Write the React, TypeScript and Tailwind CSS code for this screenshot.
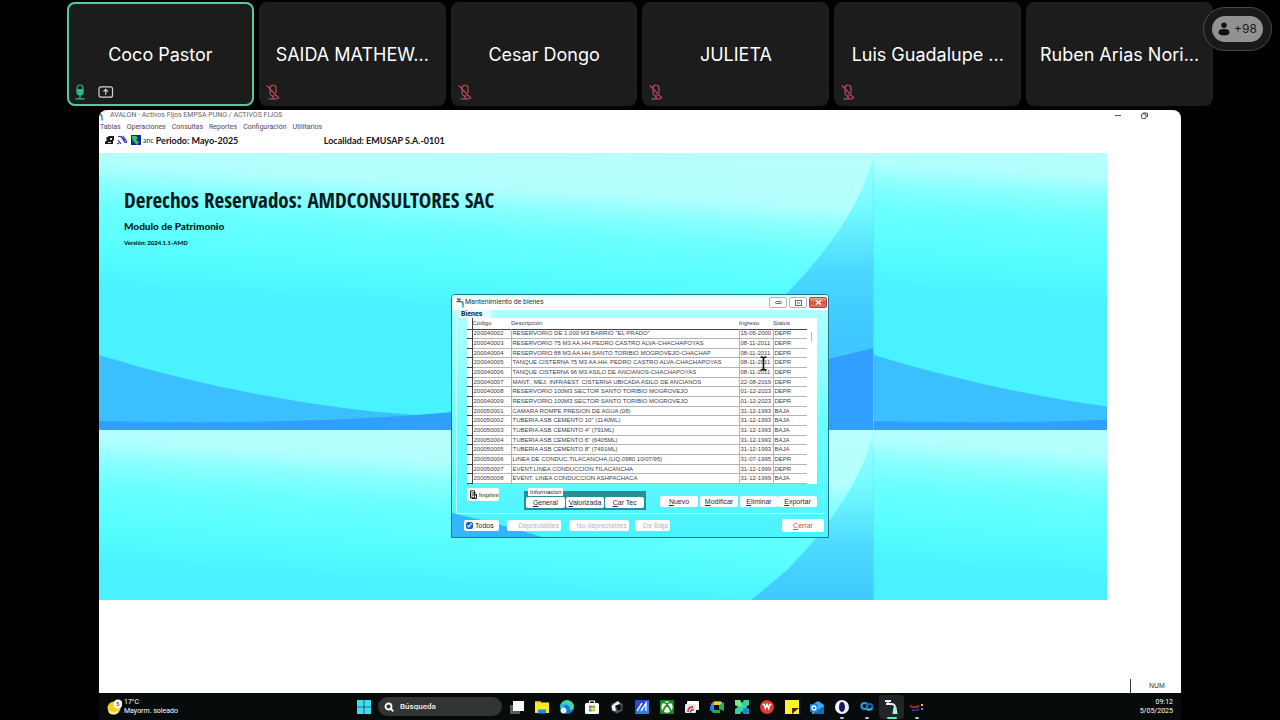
import type { ReactNode } from 'react';
import clsx from 'clsx';

interface Participant {
  name: string;
  mic: 'on' | 'off' | 'none';
  sharing?: boolean;
}

interface Asset {
  code: string;
  description: string;
  date: string;
  status: 'DEPR' | 'BAJA';
}

const PARTICIPANTS: Participant[] = [
  { name: 'Coco Pastor', mic: 'on', sharing: true },
  { name: 'SAIDA MATHEW...', mic: 'off' },
  { name: 'Cesar Dongo', mic: 'off' },
  { name: 'JULIETA', mic: 'off' },
  { name: 'Luis Guadalupe ...', mic: 'off' },
  { name: 'Ruben Arias Nori...', mic: 'none' },
];

const MENUS = ['Tablas', 'Operaciones', 'Consultas', 'Reportes', 'Configuración', 'Utilitarios'];

const ASSETS: Asset[] = [
  { code: '200040002', description: 'RESERVORIO DE 1,000 M3 BARRIO "EL PRADO"', date: '15-05-2000', status: 'DEPR' },
  { code: '200040003', description: 'RESERVORIO 75 M3 AA.HH.PEDRO CASTRO ALVA-CHACHAPOYAS', date: '08-11-2011', status: 'DEPR' },
  { code: '200040004', description: 'RESERVORIO 88 M3 AA.HH.SANTO TORIBIO MOGROVEJO-CHACHAP', date: '08-11-2011', status: 'DEPR' },
  { code: '200040005', description: 'TANQUE CISTERNA 75 M3 AA.HH. PEDRO CASTRO ALVA-CHACHAPOYAS', date: '08-11-2011', status: 'DEPR' },
  { code: '200040006', description: 'TANQUE CISTERNA 96 M3 ASILO DE ANCIANOS-CHACHAPOYAS', date: '08-11-2011', status: 'DEPR' },
  { code: '200040007', description: 'MANT., MEJ. INFRAEST. CISTERNA UBICADA ASILO DE ANCIANOS', date: '22-08-2019', status: 'DEPR' },
  { code: '200040008', description: 'RESERVORIO 100M3 SECTOR SANTO TORIBIO MOGROVEJO', date: '01-12-2023', status: 'DEPR' },
  { code: '200040009', description: 'RESERVORIO 100M3 SECTOR SANTO TORIBIO MOGROVEJO', date: '01-12-2023', status: 'DEPR' },
  { code: '200050001', description: 'CAMARA ROMPE PRESION DE AGUA (08)', date: '31-12-1993', status: 'BAJA' },
  { code: '200050002', description: 'TUBERIA ASB CEMENTO 10" (1140ML)', date: '31-12-1993', status: 'BAJA' },
  { code: '200050003', description: 'TUBERIA ASB CEMENTO 4" (791ML)', date: '31-12-1993', status: 'BAJA' },
  { code: '200050004', description: 'TUBERIA ASB CEMENTO 6" (6405ML)', date: '31-12-1993', status: 'BAJA' },
  { code: '200050005', description: 'TUBERIA ASB CEMENTO 8" (7491ML)', date: '31-12-1993', status: 'BAJA' },
  { code: '200050006', description: 'LINEA DE CONDUC.TILACANCHA (LIQ.0980 10/07/95)', date: '31-07-1995', status: 'DEPR' },
  { code: '200050007', description: 'EVENT.LINEA CONDUCCION TILACANCHA', date: '31-12-1999', status: 'DEPR' },
  { code: '200050008', description: 'EVENT. LINEA CONDUCCION ASHPACHACA', date: '31-12-1999', status: 'BAJA' },
];

/* ── Meeting strip ─────────────────────────────────────────── */

function MicOn() {
  return (
    <svg width="12" height="16" viewBox="0 0 12 16" fill="none" stroke="#2bb98c" strokeWidth="1.2">
      <rect x="3" y="1" width="6" height="10" rx="3" />
      <path d="M3.500 5.500h5v3a2.500 2.500 0 0 1-5 0z" fill="#2bb98c" />
      <path d="M6 11.500v3M1.500 14.800h9" />
    </svg>
  );
}

function MicOff() {
  return (
    <svg width="14" height="16" viewBox="0 0 14 16" fill="none" stroke="#c04a5c" strokeWidth="1.2">
      <path d="M4 4.500a3 3 0 0 1 6-.5v5M4 6v3a3 3 0 0 0 4.500 2.600" />
      <path d="M7 12v2.800M2.500 14.900h9" />
      <path d="M.8 1.500l12.400 13" />
    </svg>
  );
}

function ShareIcon() {
  return (
    <svg width="16" height="12" viewBox="0 0 16 12" fill="none" stroke="#d4d4d4" strokeWidth="1.2">
      <rect x="1" y=".8" width="13.500" height="10.400" rx="2" />
      <path d="M7.750 8.800V3.500M5.500 5.600l2.250-2.200L10 5.600" />
    </svg>
  );
}

function ParticipantTile({ name, mic, sharing }: Participant) {
  return (
    <div
      className={clsx(
        'relative flex h-[104px] min-w-0 flex-1 items-center justify-center rounded-lg bg-[#1c1c1c]',
        sharing && 'ring-2 ring-inset ring-[#57c9a2]',
      )}
    >
      <span className="whitespace-nowrap pt-0.5 text-[18px] leading-6 text-white">{name}</span>
      <div className="absolute bottom-1.5 left-[7px] flex items-center gap-3">
        {mic === 'on' && <MicOn />}
        {mic === 'off' && <MicOff />}
        {sharing && <ShareIcon />}
      </div>
    </div>
  );
}

function OverflowBadge() {
  return (
    <button
      type="button"
      className="absolute right-2 top-[7px] flex h-11 w-[69px] items-center justify-center rounded-full border border-[#4a4a4a] bg-[#191919]"
    >
      <span className="flex h-[26px] w-[51px] items-center justify-center gap-1 rounded-full bg-[#929292] text-[12px] text-[#1a1a1a]">
        <svg width="12" height="14" viewBox="0 0 12 14" fill="#111">
          <circle cx="6" cy="3.300" r="2.700" />
          <path d="M.5 10.300C.5 8 2.500 7 6 7s5.500 1 5.500 3.300S9.500 13.500 6 13.500.5 12.600.5 10.300z" />
        </svg>
        +98
      </span>
    </button>
  );
}

/* ── Wallpaper ─────────────────────────────────────────────── */

function Wallpaper() {
  return (
    <svg className="absolute inset-0 h-full w-full" viewBox="0 0 1008 447" preserveAspectRatio="none">
      <defs>
        {/* tilted so the haze reaches further down on the right */}
        <linearGradient id="sky" gradientUnits="userSpaceOnUse" x1="0" y1="-45" x2="-11" y2="135">
          <stop offset="0" stopColor="#baffff" />
          <stop offset=".3" stopColor="#b2fffe" />
          <stop offset=".42" stopColor="#8affff" />
          <stop offset=".55" stopColor="#6affff" />
          <stop offset=".8" stopColor="#55fdff" />
          <stop offset="1" stopColor="#48f3ff" />
        </linearGradient>
        <linearGradient id="arc" x1="0" y1="0" x2="0" y2="1">
          <stop offset="0" stopColor="#a0ffff" />
          <stop offset=".2" stopColor="#74fbff" />
          <stop offset=".42" stopColor="#4bd9ff" />
          <stop offset=".6" stopColor="#3fcaff" />
          <stop offset="1" stopColor="#3bbfff" />
        </linearGradient>
        <g id="tile">
          <rect width="775" height="277" fill="url(#sky)" />
          <path d="M0 202C110 236 230 257 318 262L520 277H0z" fill="#3bbfff" />
          <path d="M775 0C765 45 735 92 688 140C630 190 570 235 480 262L775 277z" fill="url(#arc)" />
          <path d="M0 268Q180 272 318 262Q600 240 775 195V277H0z" fill="#319fff" />
          <path d="M774.500 20V277" stroke="#6fe0ff" strokeWidth="1" opacity=".6" />
        </g>
      </defs>
      <use href="#tile" />
      <use href="#tile" x="775" />
      <use href="#tile" y="277" />
      <use href="#tile" x="775" y="277" />
    </svg>
  );
}

/* ── Asset window ──────────────────────────────────────────── */

function FaucetIcon({ className }: { className?: string }) {
  return (
    <svg className={className} width="9" height="10" viewBox="0 0 9 10" fill="none" stroke="#4b5a60" strokeWidth="1.300">
      <path d="M1 1.200h4M3 1.200v2M.5 3.600h4.500c1.500 0 2 .8 2 2.400" />
      <path d="M7 6v3.500" stroke="#3ccfc0" strokeWidth="2" />
    </svg>
  );
}

function WindowButton({ label, close, children }: { label: string; close?: boolean; children: ReactNode }) {
  return (
    <button
      type="button"
      aria-label={label}
      className={clsx(
        'flex h-[11px] w-[18px] items-center justify-center rounded-xs border',
        close ? 'border-[#8b5050] bg-linear-to-b from-[#eba79b] via-[#dd4f38] to-[#e37763]' : 'border-[#a9b7c4] bg-white',
      )}
    >
      {children}
    </button>
  );
}

function ActionButton({ hotkey, rest, className }: { hotkey: string; rest: string; className?: string }) {
  return (
    <button type="button" className={clsx('h-[11px] rounded-xs bg-white text-center text-[7px] leading-none text-[#222a4a]', className)}>
      <u>{hotkey}</u>
      {rest}
    </button>
  );
}

function DisabledFilter({ label, className }: { label: string; className: string }) {
  return (
    <label className={clsx('flex h-[11px] items-center justify-end rounded-xs bg-white px-0.5 text-[#b9b3c6]', className)}>
      <input type="checkbox" disabled className="size-0 appearance-none" />
      {label}
    </label>
  );
}

function AssetTable() {
  return (
    <div className="flex h-[166px] bg-white">
      <table className="h-[166px] w-[340px] table-fixed border-collapse text-[6px] leading-[7px] text-[#40404c]">
        <colgroup>
          <col className="w-[5px]" />
          <col className="w-[39px]" />
          <col />
          <col className="w-[34px]" />
          <col className="w-[34px]" />
        </colgroup>
        <thead>
          <tr className="h-[11px] border-b border-[#444] text-left">
            <th className="border-r border-[#444] p-0" />
            <th className="p-0 font-normal">Código</th>
            <th className="p-0 font-normal">Descripción</th>
            <th className="p-0 font-normal">Ingreso</th>
            <th className="p-0 font-normal">Status</th>
          </tr>
        </thead>
        <tbody>
          {ASSETS.map((a) => (
            <tr key={a.code} className="whitespace-nowrap border-b border-[#b4b4b4]">
              <td className="border-b border-r border-[#444] p-0" />
              <td className="border-r border-[#b4b4b4] p-0 pl-px">{a.code}</td>
              <td className="border-r border-[#b4b4b4] p-0 pl-px">{a.description}</td>
              <td className="border-r border-[#b4b4b4] p-0 pl-px text-[#5a3540]">{a.date}</td>
              <td className="p-0 pl-px">{a.status}</td>
            </tr>
          ))}
        </tbody>
      </table>
      <div className="flex-1 pl-1 pt-3.5">
        <div className="h-2.5 w-px bg-[#b5b5b5]" />
      </div>
    </div>
  );
}

function AssetWindow() {
  return (
    <div className="absolute left-[352px] top-[141px] flex h-[244px] w-[378px] flex-col overflow-hidden rounded-t-sm border border-[#20788c] bg-linear-to-b from-[#b9ffff] via-[#6dffff] to-[#48f3ff] font-['Liberation_Sans',sans-serif] text-[7px] leading-none">
      <header className="flex h-[15px] shrink-0 items-center bg-linear-to-b from-[#d9ffff] via-white to-white pl-1 pr-px">
        <FaucetIcon />
        <h2 className="flex-1 font-['Roboto',sans-serif] text-[7px] text-[#263640]">Mantenimiento de bienes</h2>
        <div className="flex gap-0.5">
          <WindowButton label="Minimizar">
            <svg width="7" height="3" viewBox="0 0 7 3" fill="none" stroke="#667" className="shrink-0"><rect x=".5" y=".5" width="6" height="2" rx="1" /></svg>
          </WindowButton>
          <WindowButton label="Maximizar">
            <svg width="7" height="6" viewBox="0 0 7 6" fill="none" stroke="#667" className="shrink-0"><rect x=".5" y=".5" width="6" height="5" /><path d="M2 3h3" /></svg>
          </WindowButton>
          <WindowButton label="Cerrar ventana" close>
            <svg width="7" height="5" viewBox="0 0 7 5" stroke="#fff" strokeWidth="1.400" className="shrink-0"><path d="M1 .5l5 4M6 .5l-5 4" /></svg>
          </WindowButton>
        </div>
      </header>

      <section className="mx-1 border-x border-b border-[#c4ffff] pl-2.5 pr-1.5">
        <h3 className="-ml-2 h-2 w-8 bg-[#e4ffff] pl-0.5 font-['Roboto',sans-serif] font-bold leading-[8px] text-[#223]">Bienes</h3>
        <AssetTable />
        <div className="flex h-[29px] items-start pt-0.5">
          <button type="button" className="mt-0.5 flex h-[13px] w-8 items-center gap-0.5 rounded-xs bg-white px-0.5 text-[6px] text-[#111]">
            <svg className="shrink-0" width="8" height="9" viewBox="0 0 8 9" fill="none" stroke="#222">
              <path d="M1.500.8h4v7h-4zM2.500 3h4.500M2.500 5h4.500M3 6.500v2h4.500V4" />
            </svg>
            Imprimi
          </button>
          <fieldset className="relative ml-[25px] mt-[5px] flex w-[122px] gap-px border-2 border-t-[6px] border-[#279096] bg-[#279096]">
            <legend className="absolute -top-[9px] left-0.5 bg-white px-0.5 text-[6px] leading-[8px] text-[#223]">Información</legend>
            <ActionButton hotkey="G" rest="eneral" className="flex-1" />
            <ActionButton hotkey="V" rest="alorizada" className="flex-1" />
            <ActionButton hotkey="C" rest="ar Tec" className="flex-1" />
          </fieldset>
          <div className="ml-auto mt-2.5 flex">
            <ActionButton hotkey="N" rest="uevo" className="mr-0.5 w-[38px]" />
            <ActionButton hotkey="M" rest="odificar" className="mr-0.5 w-[38px]" />
            <ActionButton hotkey="E" rest="liminar" className="w-[38px]" />
            <ActionButton hotkey="E" rest="xportar" className="w-[39px]" />
          </div>
        </div>
      </section>

      <footer className="relative flex flex-1 items-center px-1 pl-3">
        <svg className="absolute bottom-0 left-0" width="90" height="24" viewBox="0 0 90 24">
          <path d="M0 0Q45 10 90 24H0z" fill="#35b4ff" />
        </svg>
        <label className="relative flex h-[11px] w-[35px] items-center gap-0.5 rounded-xs bg-white px-0.5 text-[#223]">
          <input type="checkbox" defaultChecked className="size-[7px] accent-[#0a66c8]" />
          Todos
        </label>
        <DisabledFilter label="Depreciables" className="relative ml-2 w-[54px]" />
        <DisabledFilter label="No depreciables" className="ml-2 w-[60px]" />
        <DisabledFilter label="De Baja" className="ml-1.5 w-[35px]" />
        <button type="button" className="ml-auto h-[13px] w-[42px] rounded-xs bg-white text-[#c0504d]">
          <u>C</u>errar
        </button>
      </footer>

      {/* text cursor */}
      <svg className="absolute left-[308px] top-[61px]" width="7" height="15" viewBox="0 0 7 15" fill="none" stroke="#111" strokeWidth="1.600">
        <path d="M.5 1C2 1 3.500 1.200 3.500 2.500V12.500C3.500 13.800 2 14 .5 14M6.500 1C5 1 3.500 1.200 3.500 2.500M3.500 12.500C3.500 13.800 5 14 6.500 14" />
      </svg>
    </div>
  );
}

/* ── Taskbar ───────────────────────────────────────────────── */

interface TaskApp {
  name: string;
  running?: boolean;
  active?: boolean;
  icon: ReactNode;
}

const APPS: TaskApp[] = [
  { name: 'Vista de tareas', icon: <><rect x="0" y="5" width="10" height="9" fill="#5a5a5a" /><rect x="3" y="1" width="11" height="10" fill="#fafafa" /></> },
  { name: 'Explorador', icon: <><path d="M0 1h5l1.500 1.500H14V13H0z" fill="#f6e821" /><path d="M0 1h5l1.500 1.500H0z" fill="#d9a514" /><path d="M3 13.500v-4h8v4z" fill="#1590d8" /></> },
  { name: 'Edge', icon: <><circle cx="7" cy="7" r="7" fill="#1677c8" /><path d="M2 2.500C6-2 14 1 14 7c0 2.500-3 3.500-5 2.500 2-2-.5-5-3.500-4.500C3 5 .8 6 0 7.500 0 5 .8 3.500 2 2.500z" fill="#3fd8a0" /><path d="M0 7.500C1 4 6 2 9 5 5 4 3 7 4 10z" fill="#22b5ee" /><circle cx="3.500" cy="10.500" r="3" fill="#d8f2ff" /></> },
  { name: 'Store', icon: <><path d="M4.500 4V1h5v3" fill="none" stroke="#fff" strokeWidth="1.200" /><rect x="0" y="3" width="14" height="11" rx="1.500" fill="#fff" /><path d="M4 5.500h2.700v2.700H4z" fill="#e8502c" /><path d="M7.300 5.500H10v2.700H7.300z" fill="#70b62c" /><path d="M4 8.800h2.700v2.700H4z" fill="#2aa0e8" /><path d="M7.300 8.800H10v2.700H7.300z" fill="#f0b920" /></> },
  { name: 'Unity', icon: <><path d="M7 1l5.500 3v6.500L7 13.500 1.500 10.500V4z" fill="#555b5f" /><path d="M1.500 6l6.500-5 2 2.500-5 2.500 1 5-3.500-.5z" fill="#f4f4f4" /><path d="M5.500 5.500l5-1 1 4.500L8 11z" fill="#0c1013" /></> },
  { name: 'MyASUS', icon: <><rect width="14" height="14" fill="#2a48cc" /><path d="M0 14L14 0v14z" fill="#2b7fe0" /><path d="M2 11L7 3M6 11l5-8v8" stroke="#eef" strokeWidth="1.500" fill="none" /></> },
  { name: 'Xbox', icon: <><rect width="14" height="14" rx="1" fill="#148a20" /><circle cx="7" cy="7" r="5.700" fill="#f2fff2" /><path d="M3 11.500C3.500 8.500 5.500 6 7 4.800 8.500 6 10.500 8.500 11 11.500M3 2.500Q5 2.500 7 4.200 9 2.500 11 2.500" fill="none" stroke="#148a20" strokeWidth="1.700" /></> },
  { name: 'Escritorio remoto', icon: <><rect x="2" y="1" width="12" height="9" rx="1" fill="#fff" /><rect x="0" y="4" width="11" height="9" rx="1" fill="#e6e9ec" /><path d="M3 12c0-3 1.500-5 5-5" fill="none" stroke="#d44848" strokeWidth="1.800" /><path d="M5.500 12.500c0-2 1-3 3.500-3" fill="none" stroke="#40689c" strokeWidth="1.400" /></> },
  { name: 'Meet', icon: <><path d="M1 4l3-3h7v3H4v7H1z" fill="#28a0f0" /><path d="M4 2h8v3H4z" fill="#f7cf18" /><path d="M1 10h9v3H3z" fill="#20b04a" /><path d="M9 5l5-3v9l-5-2z" fill="#25b653" /><path d="M0 6h3v5H0z" fill="#2878e0" /></> },
  { name: 'Mapas', icon: <><path d="M0 0h5l2 3 2-3h5v5l-3 2 3 2v5H9l-2-3-2 3H0V9l3-2-3-2z" fill="#34cfa6" /><path d="M0 0h5l3 7-8-2z" fill="#7deb78" /><circle cx="11" cy="11" r="3" fill="#1585d0" /></> },
  { name: 'WPS', icon: <><circle cx="7" cy="7" r="7" fill="#df3a2c" /><path d="M2.500 4.500h1.800l1 4 1.700-4 1.700 4 1-4h1.800" stroke="#fff" strokeWidth="1.500" fill="none" /></> },
  { name: 'Notas', icon: <><path d="M0 0h14v14H0z" fill="#fff32a" /><path d="M7 8h7l-7 6z" fill="#37340c" /></> },
  { name: 'Outlook', icon: <><path d="M2 5l6-4 6 4v9H2z" fill="#37b3f2" /><path d="M2 14l12-8v8z" fill="#0c6dc2" /><rect y="4" width="8" height="8" rx="1" fill="#1489de" /><circle cx="4" cy="8" r="2" fill="none" stroke="#fff" strokeWidth="1.300" /></> },
  { name: 'Opera', running: true, icon: <><circle cx="7" cy="7" r="7" fill="#f2f0ff" /><ellipse cx="7" cy="7" rx="3" ry="5" fill="#1b1464" /></> },
  { name: 'Webex', running: true, icon: <><circle cx="4.500" cy="6" r="3" fill="none" stroke="#2a9ad8" strokeWidth="2.200" /><circle cx="9.500" cy="7" r="3" fill="none" stroke="#1b60bd" strokeWidth="2.200" /><path d="M6 8.500Q9 11 12 8" fill="none" stroke="#35c3b4" strokeWidth="1.600" /></> },
  { name: 'Avalon', active: true, icon: <><path d="M0 1h6M3 1v3M1 4h5q4 0 4 3" fill="none" stroke="#eef" strokeWidth="1.800" /><path d="M8.500 7h3l1 7h-5z" fill="#a8f2dc" /></> },
  { name: 'Grabador', running: true, icon: <><path d="M0 5q4 3 9 0v2Q4 9 0 7z" fill="#d32c2c" /><path d="M2 10q4 1 7-1" stroke="#2750b8" strokeWidth="1.400" fill="none" /><path d="M11 4h2v2h-2z" fill="#e9c328" /><path d="M11 8h2v2h-2z" fill="#c44be0" /></> },
];

function Taskbar() {
  return (
    <nav className="grid h-[27px] shrink-0 grid-cols-[1fr_auto_1fr] items-center bg-[#070b0b] font-['Roboto',sans-serif] text-[7px] leading-[9px] text-white">
      <div className="flex items-center gap-0.5 pl-2">
        <svg width="15" height="16" viewBox="0 0 15 16">
          <circle cx="7" cy="9" r="6.500" fill="#efd11f" />
          <path d="M1 11q6 4 10 0v3q-5 3-9 0z" fill="#f8eda0" />
          <circle cx="11" cy="5" r="4.500" fill="#f7f7f7" />
          <text x="9" y="7" fontSize="6" fill="#333">5</text>
        </svg>
        <p>17°C<br />Mayorm. soleado</p>
      </div>

      <div className="flex items-center pl-1.5">
        <button type="button" aria-label="Inicio">
          <svg width="14" height="14" viewBox="0 0 14 14" fill="#3fdcf2">
            <path d="M0 0h6.700v6.700H0zM7.300 0H14v6.700H7.300zM0 7.300h6.700V14H0zM7.300 7.300H14V14H7.300z" />
          </svg>
        </button>
        <label className="ml-[7px] mr-0.5 flex h-[19px] w-[124px] items-center gap-1.5 rounded-full bg-[#323534] pl-1.5">
          <svg width="10" height="10" viewBox="0 0 10 10" fill="none" stroke="#fff" strokeWidth="1.800">
            <circle cx="4.500" cy="4.500" r="3" />
            <path d="M6.700 6.700L9.300 9.300" />
          </svg>
          <input type="text" placeholder="Búsqueda" className="w-20 bg-transparent text-[8px] font-semibold outline-none placeholder:text-[#e8e8e8]" />
        </label>
        {APPS.map((app) => (
          <button
            key={app.name}
            type="button"
            aria-label={app.name}
            className={clsx('relative flex h-6 w-[25px] items-center justify-center rounded-sm', app.active && 'bg-[#212625]')}
          >
            <svg width="14" height="14" viewBox="0 0 14 14">{app.icon}</svg>
            {app.running && <span className="absolute bottom-0 h-0.5 w-1 rounded-full bg-[#b9c4c6]" />}
            {app.active && <span className="absolute bottom-0 h-0.5 w-2.5 rounded-full bg-[#64e0dc]" />}
          </button>
        ))}
      </div>

      <p className="pr-2 text-right">09:12<br />5/05/2025</p>
    </nav>
  );
}

/* ── Shared desktop ────────────────────────────────────────── */

function Toolbar() {
  return (
    <div className="flex h-5 items-center pb-1.5 pl-1.5 font-['Lato',sans-serif] text-[9px] font-bold leading-none text-[#1a1014]">
      <svg width="36" height="10" viewBox="0 0 36 10">
        <path d="M1 3l3-2h5v4L8 6v3H0V7l2-2z" fill="#1c1418" />
        <path d="M5 3h2v2H5zM3 7h3v1H3z" fill="#ddd" />
        <path d="M13 1.500h3l4 6h2M13 5l3 4M18 1l4 6M12 9l2-1M16 1l4 5" stroke="#3538b5" strokeWidth="1.200" fill="none" />
        <path d="M26 0h10v10H26z" fill="#1620a8" />
        <path d="M27 1h4l2 2-2 2 3 2-2 3-3-3-2-3z" fill="#31c951" />
      </svg>
      <span className="ml-0.5 text-[7px] font-normal text-[#333]">anc</span>
      <span className="ml-0.5 w-[168px]">Periodo: Mayo-2025</span>
      <span>Localidad: EMUSAP S.A.-0101</span>
    </div>
  );
}

function SharedScreen() {
  return (
    <main className="mx-[99px] mt-1 flex flex-1 flex-col overflow-hidden rounded-t-lg bg-white">
      <div className="flex h-[11px] items-center font-['Roboto',sans-serif] text-[7px] leading-none text-[#666]">
        <FaucetIcon className="-ml-1" />
        <h1 className="ml-1.5 flex-1">AVALON - Activos Fijos EMPSA PUNO / ACTIVOS FIJOS</h1>
        <div className="flex w-[66px] items-center gap-5">
          <button type="button" aria-label="Minimizar">
            <svg width="6" height="8" viewBox="0 0 6 8" stroke="#555"><path d="M0 3.500h6" /></svg>
          </button>
          <button type="button" aria-label="Restaurar">
            <svg width="7" height="8" viewBox="0 0 7 8" fill="none" stroke="#444"><rect x=".5" y="2" width="4.500" height="4.500" rx="1" /><path d="M2 1h3.500q1 0 1 1v3" /></svg>
          </button>
        </div>
      </div>

      <nav className="flex h-3 items-center gap-1.5 pl-px font-['Roboto',sans-serif] text-[7px] leading-none text-[#60404c]">
        {MENUS.map((m) => (
          <button key={m} type="button">{m}</button>
        ))}
      </nav>

      <Toolbar />

      <div className="relative mr-[74px] h-[447px] shrink-0">
        <Wallpaper />
        <div className="relative pl-[25px] pt-[35px] font-['Lato',sans-serif] font-black text-[#061a20]">
          <p className="font-['Open_Sans_Condensed','Roboto_Condensed','Roboto',sans-serif] text-[21px] font-bold leading-6">
            Derechos Reservados: AMDCONSULTORES SAC
          </p>
          <p className="mt-2 text-[10px] leading-3">Modulo de Patrimonio</p>
          <p className="mt-1.5 text-[6px] leading-[10px]">Versión: 2024.1.1-AMD</p>
        </div>
        <AssetWindow />
      </div>

      <div className="flex flex-1 items-end justify-end font-['Liberation_Sans',sans-serif] text-[7px] text-[#333]">
        <span className="flex h-3.5 w-[51px] items-center border-l border-[#333] pl-[18px]">NUM</span>
      </div>

      <Taskbar />
    </main>
  );
}

export default function App() {
  return (
    <div className="relative flex min-h-screen flex-col overflow-hidden bg-black font-['Inter',sans-serif]">
      <div className="mx-[67px] mt-0.5 flex gap-[5px]">
        {PARTICIPANTS.map((p) => (
          <ParticipantTile key={p.name} {...p} />
        ))}
      </div>
      <OverflowBadge />
      <SharedScreen />
    </div>
  );
}
